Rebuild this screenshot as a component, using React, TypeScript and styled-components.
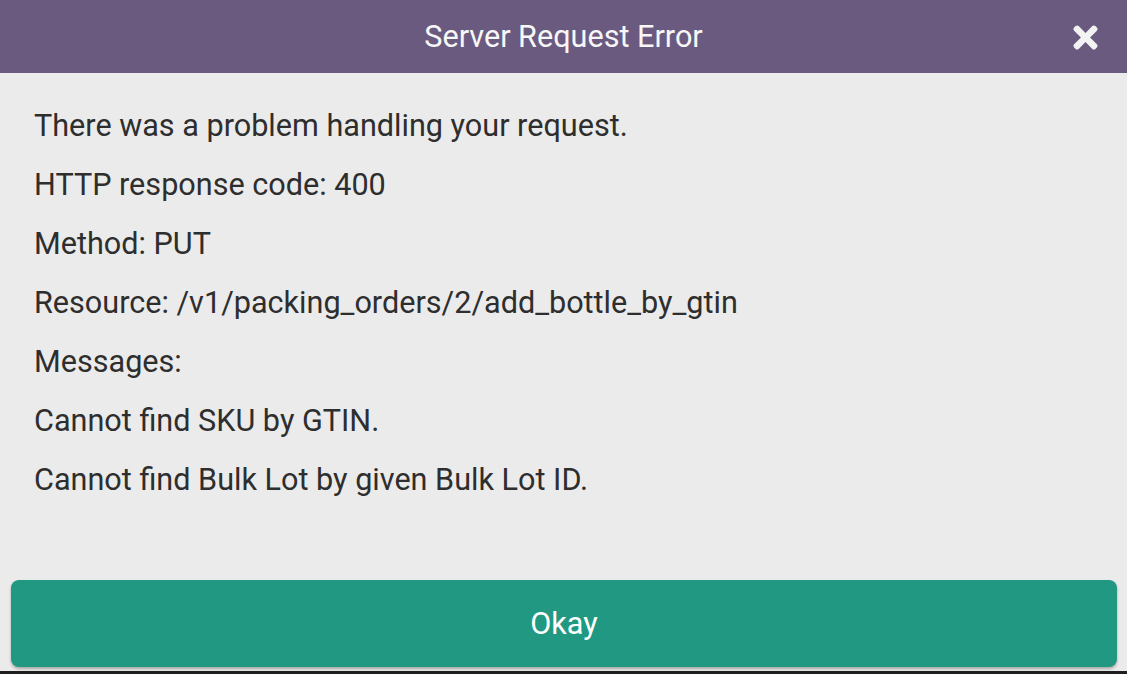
import React from "react";
import styled, { createGlobalStyle } from "styled-components";
import { FaTimes } from "react-icons/fa";

const Global = createGlobalStyle`
  html, body { margin: 0; padding: 0; }
  body { background: #1f1f1f; font-family: Roboto, "Noto Sans", sans-serif; }
`;

const Page = styled.div`
  height: 674px;
  background: #1f1f1f;
`;

const Dialog = styled.div`
  height: 671px;
  background: #ebebeb;
  display: flex;
  flex-direction: column;
`;

const Header = styled.header`
  height: 73px;
  flex: none;
  background: #6b5a80;
  position: relative;
  display: flex;
  align-items: center;
  justify-content: center;
`;

const Title = styled.h1`
  margin: 0;
  font-size: 30.6px;
  font-weight: 400;
  color: #f7f7f7;
`;

const Close = styled.button`
  position: absolute;
  left: 1067px;
  top: 19px;
  width: 36px;
  height: 36px;
  padding: 0;
  border: 0;
  background: none;
  color: #f3f3f3;
  display: flex;
  align-items: center;
  justify-content: center;
`;

const Body = styled.div`
  flex: 1;
  padding: 23px 34px 0;
`;

const Line = styled.p`
  margin: 0;
  font-size: 30.6px;
  line-height: 59px;
  color: #2e2e2e;
`;

const Footer = styled.div`
  padding: 0 10px 4px 11px;
`;

const OkButton = styled.button`
  width: 100%;
  height: 87px;
  border: 0;
  border-radius: 8px;
  background: #219882;
  color: #ffffff;
  font-family: Roboto, "Noto Sans", sans-serif;
  font-size: 30.6px;
  box-shadow: 0 2px 3px rgba(0, 0, 0, 0.28);
`;

const lines = [
  "There was a problem handling your request.",
  "HTTP response code: 400",
  "Method: PUT",
  "Resource: /v1/packing_orders/2/add_bottle_by_gtin",
  "Messages:",
  "Cannot find SKU by GTIN.",
  "Cannot find Bulk Lot by given Bulk Lot ID.",
];

export default function App() {
  return (
    <>
      <Global />
      <Page>
        <Dialog>
          <Header>
            <Title>Server Request Error</Title>
            <Close aria-label="Close">
              <FaTimes size={35} />
            </Close>
          </Header>
          <Body>
            {lines.map((l) => (
              <Line key={l}>{l}</Line>
            ))}
          </Body>
          <Footer>
            <OkButton>Okay</OkButton>
          </Footer>
        </Dialog>
      </Page>
    </>
  );
}
